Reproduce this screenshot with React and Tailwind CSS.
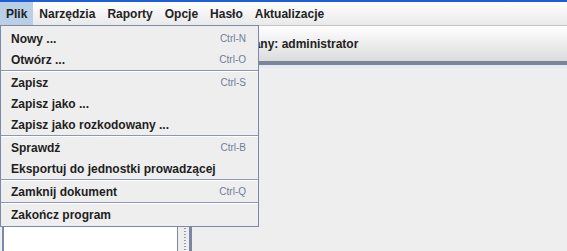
import React from "react";

const menus = ["Plik", "Narzędzia", "Raporty", "Opcje", "Hasło", "Aktualizacje"];

const groups = [
  [
    ["Nowy ...", "Ctrl-N"],
    ["Otwórz ...", "Ctrl-O"],
  ],
  [
    ["Zapisz", "Ctrl-S"],
    ["Zapisz jako ...", ""],
    ["Zapisz jako rozkodowany ...", ""],
  ],
  [
    ["Sprawdź", "Ctrl-B"],
    ["Eksportuj do jednostki prowadzącej", ""],
  ],
  [["Zamknij dokument", "Ctrl-Q"]],
  [["Zakończ program", ""]],
];

export default function App() {
  return (
    <div className="relative w-[567px] h-[251px] overflow-hidden bg-[#eeeeee] font-['Liberation_Sans',Arial,sans-serif] flex flex-col">
      <div className="h-[2px] bg-[#1c5fd6] shrink-0" />
      {/* menu bar */}
      <div className="h-[24px] shrink-0 flex bg-gradient-to-b from-[#ffffff] to-[#e9e9e9] border-b border-[#c6c6c6]">
        {menus.map((m, i) => (
          <div
            key={m}
            className={
              "px-[6px] flex items-center text-[12px] font-bold text-[#222] leading-none " +
              (i === 0 ? "bg-[#b8cfe5]" : "")
            }
          >
            {m}
          </div>
        ))}
      </div>
      {/* header panel */}
      <div className="h-[35px] shrink-0 border-t border-white bg-gradient-to-b from-[#fefefe] to-[#dcdcdc] flex items-center pl-[205px] text-[12px] font-bold text-[#222]">
        Zalogowany: administrator
      </div>
      <div className="h-[4px] shrink-0 bg-[#7c8599]" />
      <div className="h-[3px] shrink-0 bg-[#e3eaf3]" />
      {/* content */}
      <div className="flex-1 flex pt-[40px]">
        <div className="ml-[2px] w-[176px] bg-white border-l-2 border-r border-[#7d89a8]" />
        <div className="w-[11px] flex justify-center">
          <div className="w-[2px] ml-[3px] bg-[repeating-linear-gradient(to_bottom,#8f99b5_0_1px,transparent_1px_3px)]" />
        </div>
        <div className="w-[3px] bg-[#7b86a5]" />
        <div className="flex-1" />
      </div>

      {/* dropdown menu */}
      <div className="absolute left-0 top-[25px] w-[259px] bg-[#eeeeee] border border-[#7d89a8] pt-[2px] pb-[1px]">
        {groups.map((g, gi) => (
          <div key={gi}>
            {gi > 0 && <div className="h-[2px] border-t border-[#8d97b3] bg-white" />}
            {g.map(([label, sc]) => (
              <div
                key={label}
                className="h-[21px] flex items-center justify-between pl-[10px] pr-[12px]"
              >
                <span className="text-[12px] font-bold text-[#1e1e1e] leading-none">{label}</span>
                <span className="text-[10px] text-[#6f7d9b] leading-none">{sc}</span>
              </div>
            ))}
          </div>
        ))}
      </div>
    </div>
  );
}
